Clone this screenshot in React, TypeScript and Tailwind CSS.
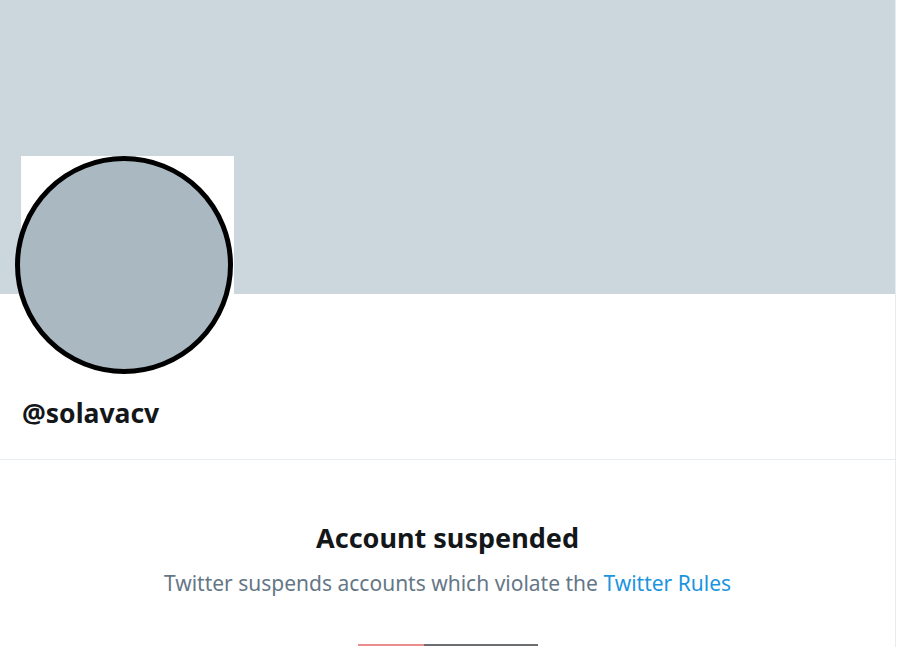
export default function App() {
  return (
    <div
      className="min-h-[647px] w-[900px] overflow-hidden bg-white"
      style={{ fontFamily: '"Noto Sans", "Open Sans", sans-serif' }}
    >
      <div className="w-[896px] border-r border-[#e6ecf0] min-h-[647px]">
        <div className="h-[294px] bg-[#ccd6dd]" />

        <div className="relative ml-[15px] -mt-[138px] h-[218px] w-[218px]">
          <div className="absolute left-[6px] top-0 h-[138px] w-[213px] bg-white" />
          <div className="relative h-[218px] w-[218px] rounded-full border-[5px] border-black bg-[#aab8c2]" />
        </div>

        <div className="px-[22px] pt-[22px] pb-[29px]">
          <p className="text-[26.5px] font-bold leading-[34px] text-[#14171a]">@solavacv</p>
        </div>

        <div className="border-t border-[#e6ecf0]" />

        <div className="flex flex-col items-center pt-[61px]">
          <h2 className="text-[27px] font-bold leading-[34px] text-[#14171a]">Account suspended</h2>
          <p className="mt-[14px] text-[21px] leading-[28px] text-[#657786]">
            Twitter suspends accounts which violate the{" "}
            <a className="text-[#1b95e0]">Twitter Rules</a>
          </p>
          <div className="mt-[47px] flex h-[2px] w-[180px]">
            <div className="w-[66px] bg-[#e25c5c]/70" />
            <div className="flex-1 bg-[#6b6f72]" />
          </div>
        </div>
      </div>
    </div>
  );
}
